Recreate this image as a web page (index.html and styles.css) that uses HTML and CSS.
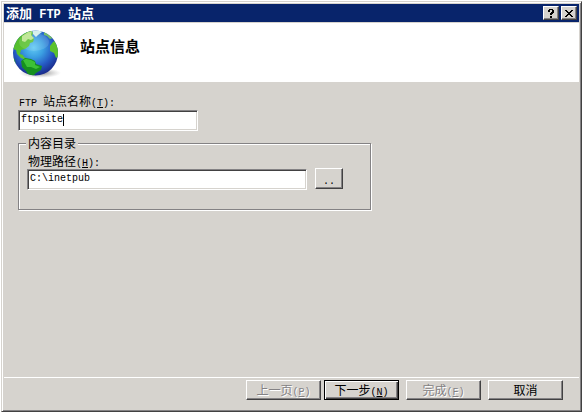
FILE: index.html
```html
<!DOCTYPE html>
<html lang="zh-CN">
<head>
<meta charset="utf-8">
<title>添加 FTP 站点</title>
<link rel="stylesheet" href="styles.css">
</head>
<body>
<main class="window">
  <header class="titlebar">
    <h1 class="title">添加<span class="latin"> FTP </span>站点</h1>
    <button class="caption" type="button" aria-label="帮助">
      <svg width="8" height="9" viewBox="0 0 8 9" shape-rendering="crispEdges"><path d="M2 0h4v1h1v3h-1v1h-1v1h-2v-2h1v-1h1v-2h-2v2h-2v-2h1zM3 7h2v2h-2z"/></svg>
    </button>
    <button class="caption" type="button" aria-label="关闭">
      <svg width="8" height="7" viewBox="0 0 8 7" shape-rendering="crispEdges"><path d="M0 0h2v1h1v1h2v-1h1v-1h2v1h-1v1h-1v1h-1v1h1v1h1v1h1v1h-2v-1h-1v-1h-2v1h-1v1h-2v-1h1v-1h1v-1h1v-1h-1v-1h-1v-1h-1z"/></svg>
    </button>
  </header>
  <section class="banner">
    <svg class="globe" width="50" height="50" viewBox="0 0 50 50" aria-hidden="true">
      <defs>
        <radialGradient id="sea" cx="46%" cy="38%" r="62%">
          <stop offset="0" stop-color="#62caf3"/><stop offset=".35" stop-color="#3b9fe2"/><stop offset=".7" stop-color="#2559c3"/><stop offset="1" stop-color="#1a2b8c"/>
        </radialGradient>
        <linearGradient id="land" x1="0" y1="0" x2="1" y2="1">
          <stop offset="0" stop-color="#4fb92b"/><stop offset="1" stop-color="#62c934"/>
        </linearGradient>
        <radialGradient id="shade"><stop offset="0" stop-color="#555" stop-opacity=".75"/><stop offset="1" stop-color="#999" stop-opacity="0"/></radialGradient>
        <clipPath id="disc"><circle cx="23.500" cy="24" r="22.500"/></clipPath>
      </defs>
      <ellipse cx="28" cy="44" rx="21" ry="5" fill="url(#shade)"/>
      <circle cx="23.500" cy="24" r="22.500" fill="url(#sea)"/>
      <g clip-path="url(#disc)">
        <path fill="url(#land)" d="M1 20L4 10l7-7 8-2 2 3-1 3 2 3-1 3-3 1-1 3-4 3-4 1-1 4 3 1 1 2 4 2-2 1-5-2-4-4-1-4z"/>
        <path fill="#b9e48c" d="M10 7l6-4 4-1-1 4 3 3-3 2-3-1-3 3-3-1z"/>
        <path fill="#d5efec" d="M20 0l11 0-1 3-4 3-2 2-3-3z"/>
        <path fill="#74bd6b" d="M32 2l5 2 4 5-3 1-3-3-3-1z"/>
        <path fill="#5cc22c" d="M38 17l3-4 2-1 3 6 1 9-3 2-2-5-4-2z"/>
        <path fill="#16901f" d="M9 32l4-3 6 1 4 2 1 3 6 2-1 4-5 3-3 3-4 0-3-5-4-4z"/>
        <path fill="#3cc136" d="M11 31l3-1 5 1 4 2 0 3 5 2-4 2-5-2-4 0z"/>
        <path fill="#1e9926" d="M1 28l2 3 1 5-2-1z"/>
      </g>
      <ellipse cx="22" cy="13" rx="15" ry="9" fill="#fff" opacity=".12"/>
    </svg>
    <h2 class="heading">站点信息</h2>
  </section>
  <form class="form">
    <section class="content">
      <label class="label" for="site"><span class="latin">FTP </span>站点名称<span class="latin">(<u>T</u>):</span></label>
      <div class="site"><input class="field" id="site" type="text" value="ftpsite"><span class="cursor"></span></div>
      <fieldset class="group">
        <legend>内容目录</legend>
        <label class="label" for="path">物理路径<span class="latin">(<u>H</u>):</span></label>
        <div class="row">
          <input class="field" id="path" type="text" value="C:\inetpub">
          <button class="button browse" type="button" aria-label="浏览"><span class="latin">..</span></button>
        </div>
      </fieldset>
    </section>
    <footer class="footer">
      <div class="pair">
        <button class="button" type="button" disabled>上一页<span class="latin">(<u>P</u>)</span></button>
        <button class="button primary" type="submit">下一步<span class="latin">(<u>N</u>)</span></button>
      </div>
      <button class="button" type="button" disabled>完成<span class="latin">(<u>F</u>)</span></button>
      <button class="button" type="button">取消</button>
    </footer>
  </form>
</main>
</body>
</html>
```
FILE: styles.css
```css
* { box-sizing: border-box; }

body {
  margin: 0;
  padding: 1px 1px 0;
  min-height: 100vh;
  display: flex;
  background: #fff;
  color: #000;
  font: 12px/14px "Noto Sans CJK SC", sans-serif;
}

.latin {
  font-family: "Liberation Mono", monospace;
  font-size: 10px;
  line-height: 0;
  white-space: pre;
}

.window {
  flex: 1;
  display: flex;
  flex-direction: column;
  padding: 1px;
  background: #d6d3ce;
  border: 1px solid;
  border-color: #d6d3ce #424142 #424142 #d6d3ce;
  box-shadow: inset 1px 1px #fff, inset -1px -1px #848284;
}

.titlebar {
  display: flex;
  align-items: center;
  height: 18px;
  margin: 1px 1px 0;
  padding: 0 2px;
  background: #08246b;
}

.title {
  flex: 1;
  margin: 0;
  color: #fff;
  font-size: 13px;
  line-height: 18px;
}

.title .latin { font-size: 12px; }

.caption {
  display: flex;
  align-items: center;
  justify-content: center;
  width: 16px;
  height: 14px;
  margin-left: 2px;
  padding: 0;
  background: #d6d3ce;
  border: 1px solid;
  border-color: #fff #424142 #424142 #fff;
  box-shadow: inset -1px -1px #848284;
}

.banner {
  display: flex;
  height: 59px;
  margin: 1px 1px 0;
  padding: 6px 8px 0;
  background: #fff;
}

.heading {
  margin: 8px 0 0 18px;
  font-size: 15px;
  line-height: 18px;
}

.globe { flex: none; }

.form {
  flex: 1;
  display: flex;
  flex-direction: column;
}

.content {
  flex: 1;
  padding: 12px 15px;
}

.label {
  display: block;
  padding-left: 1px;
  line-height: 14px;
}

.field {
  width: 180px;
  height: 21px;
  padding: 0 1px 2px 2px;
  background: #fff;
  border: 1px solid;
  border-color: #848284 #fff #fff #848284;
  border-radius: 0;
  box-shadow: inset 1px 1px #424142, inset -1px -1px #d6d3ce;
  font: 10px/14px "Liberation Mono", monospace;
  outline: 0;
}

.site {
  position: relative;
  width: 180px;
  margin-top: 2px;
}

.site .field { display: block; }

.cursor {
  position: absolute;
  left: 45px;
  top: 4px;
  width: 1px;
  height: 12px;
  background: #000;
}

.group {
  width: 353px;
  height: 74px;
  margin: 5px 0 0;
  padding: 4px 8px;
  border: 1px solid #848284;
  box-shadow: 1px 1px #fff, inset 1px 1px #fff;
}

.group legend {
  margin-left: -1px;
  padding: 0 2px;
  background: #d6d3ce;
}

.row {
  display: flex;
  gap: 8px;
}

.row .field { flex: none; width: 280px; margin-top: 1px; }

.button {
  width: 75px;
  height: 20px;
  padding: 0;
  background: #d6d3ce;
  border: 1px solid;
  border-color: #fff #424142 #424142 #fff;
  border-radius: 0;
  box-shadow: inset -1px -1px #848284;
  color: #000;
  font: inherit;
  line-height: 16px;
}

.button:disabled {
  color: #848284;
  text-shadow: 1px 1px #fff;
}

.primary {
  border-color: #000;
  box-shadow: inset 1px 1px #fff, inset -1px -1px #424142, inset -2px -2px #848284;
}

.browse { width: 28px; height: 21px; }

.footer {
  display: flex;
  justify-content: flex-end;
  gap: 7px;
  margin: 0 1px;
  padding: 2px 16px 10px 0;
  border-top: 1px solid #fff;
}

.pair { display: flex; gap: 3px; }
```
